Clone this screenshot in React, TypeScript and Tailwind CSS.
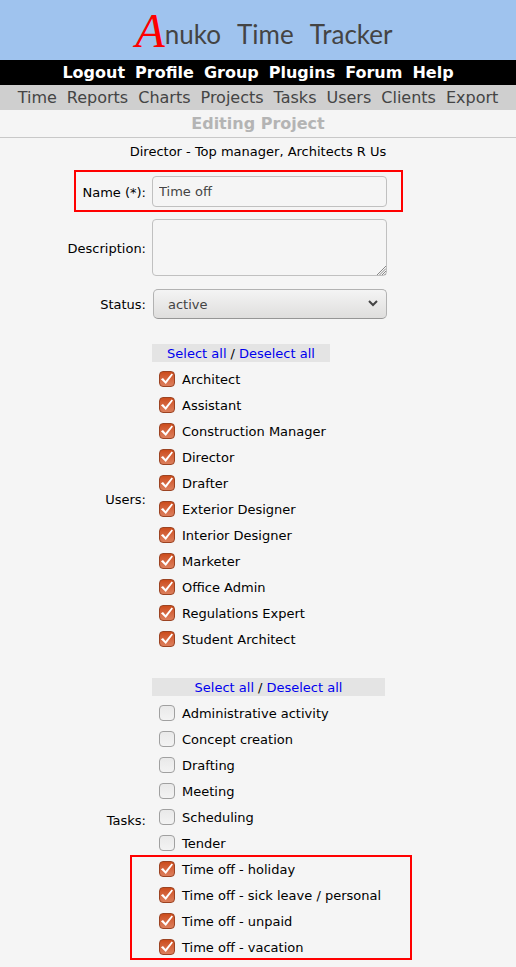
import { useState } from "react";

const mainLinks = ["Logout", "Profile", "Group", "Plugins", "Forum", "Help"];
const sectionLinks = ["Time", "Reports", "Charts", "Projects", "Tasks", "Users", "Clients", "Export"];

const users = [
  "Architect",
  "Assistant",
  "Construction Manager",
  "Director",
  "Drafter",
  "Exterior Designer",
  "Interior Designer",
  "Marketer",
  "Office Admin",
  "Regulations Expert",
  "Student Architect",
];

const workTasks = ["Administrative activity", "Concept creation", "Drafting", "Meeting", "Scheduling", "Tender"];
const timeOffTasks = [
  "Time off - holiday",
  "Time off - sick leave / personal",
  "Time off - unpaid",
  "Time off - vacation",
];

type CheckRowProps = { label: string; checked: boolean; onToggle: () => void };

function CheckRow({ label, checked, onToggle }: CheckRowProps) {
  return (
    <label className="flex h-[26px] items-center gap-[7px] pl-[7px]">
      <span className="relative flex size-4">
        <input
          type="checkbox"
          checked={checked}
          onChange={onToggle}
          className="size-4 appearance-none rounded-[4px] border border-[#a0a0a0] bg-linear-to-b from-[#e9e9e9] to-[#f3f3f3] checked:border-[#9c4322] checked:from-[#cc4c1a] checked:to-[#dc7f5c]"
        />
        {checked && (
          <svg viewBox="0 0 16 16" aria-hidden="true" className="pointer-events-none absolute inset-0 size-4">
            <path d="M1.9 8.2 4 7 6.5 9.9 12.6 2.6 14 3.6 6.8 13Z" fill="#fff" />
          </svg>
        )}
      </span>
      <span className="pt-0.5 whitespace-nowrap">{label}</span>
    </label>
  );
}

function SelectBar({ onSelect }: { onSelect: (value: boolean) => void }) {
  return (
    <div className="mb-1 flex h-[18px] items-end justify-center gap-1 bg-[#e4e4e4]">
      <button type="button" className="text-[#0000ee]" onClick={() => onSelect(true)}>
        Select all
      </button>
      <span>/</span>
      <button type="button" className="text-[#0000ee]" onClick={() => onSelect(false)}>
        Deselect all
      </button>
    </div>
  );
}

export default function App() {
  const [name, setName] = useState("Time off");
  const [selectedUsers, setSelectedUsers] = useState<string[]>(users);
  const [selectedTasks, setSelectedTasks] = useState<string[]>(timeOffTasks);

  const toggle = (list: string[], item: string) =>
    list.includes(item) ? list.filter((entry) => entry !== item) : [...list, item];

  const taskRow = (task: string) => (
    <CheckRow
      key={task}
      label={task}
      checked={selectedTasks.includes(task)}
      onToggle={() => setSelectedTasks(toggle(selectedTasks, task))}
    />
  );

  return (
    <div className="min-h-screen bg-[#f5f5f5] pb-[7px] font-['DejaVu_Sans',sans-serif] text-[13px] leading-4 text-black">
      <header>
        <div className="flex h-[60px] justify-center bg-[#9fc3ee] pt-[19px] pl-3">
          <a href="#home" className="flex items-start font-[Lato,sans-serif] text-[26px] leading-[30px] text-[#444]">
            <span className="font-['Liberation_Serif',serif] text-5xl leading-6 text-[#f00] italic">A</span>
            <span>nuko</span>
            <span className="ml-4">Time</span>
            <span className="ml-4">Tracker</span>
          </a>
        </div>
        <nav aria-label="Main" className="flex h-[25px] items-center justify-center gap-[10px] bg-black text-base font-bold text-white">
          {mainLinks.map((link) => (
            <a key={link} href={`#${link.toLowerCase()}`}>
              {link}
            </a>
          ))}
        </nav>
        <nav aria-label="Sections" className="flex h-[25px] items-center justify-center gap-[10px] bg-[#cfcfcf] text-base text-[#444]">
          {sectionLinks.map((link) => (
            <a key={link} href={`#${link.toLowerCase()}`}>
              {link}
            </a>
          ))}
        </nav>
        <h1 className="flex h-7 items-center justify-center border-b border-[#c8c8c8] text-base font-bold text-[#b4b4b4]">
          Editing Project
        </h1>
      </header>

      <main>
        <p className="pt-[6px] text-center">Director - Top manager, Architects R Us</p>

        <form className="mx-auto mt-4 w-96" onSubmit={(event) => event.preventDefault()}>
          <div className="relative grid grid-cols-[80px_1fr] items-center gap-x-[6px]">
            <label htmlFor="name" className="pt-0.5 text-right whitespace-nowrap">
              Name (*):
            </label>
            <input
              id="name"
              value={name}
              onChange={(event) => setName(event.target.value)}
              className="h-[31px] w-[235px] rounded-[4px] border border-[#c0c0c0] px-[6px] text-[#444]"
            />
            <div className="pointer-events-none absolute -top-[6px] right-[47px] -bottom-[5px] left-2 border-2 border-[#f00]" />
          </div>

          <div className="mt-3 grid grid-cols-[80px_1fr] items-center gap-x-[6px]">
            <label htmlFor="description" className="pt-0.5 text-right whitespace-nowrap">
              Description:
            </label>
            <div className="relative flex h-[57px] w-[235px]">
              <textarea
                id="description"
                className="size-full resize-none rounded-[4px] border border-[#c0c0c0] px-[6px] py-1 text-[#444]"
              />
              <svg
                viewBox="0 0 9 9"
                aria-hidden="true"
                className="pointer-events-none absolute right-px bottom-px size-[9px]"
              >
                <path d="M0 9 9 0M2.5 9 9 2.5M5 9 9 5M7.5 9 9 7.5" stroke="#888" strokeWidth="1" fill="none" />
              </svg>
            </div>
          </div>

          <div className="mt-[13px] grid grid-cols-[80px_1fr] items-center gap-x-[6px]">
            <label htmlFor="status" className="pt-0.5 text-right whitespace-nowrap">
              Status:
            </label>
            <div className="relative w-[235px] pl-px">
              <select
                id="status"
                defaultValue="active"
                className="block h-[30px] w-full appearance-none rounded-[5px] border border-[#b2b2b2] border-b-[#969696] bg-linear-to-b from-[#f4f4f4] to-[#dfdedd] px-[14px] pt-0.5 text-[#444]"
              >
                <option value="active">active</option>
                <option value="inactive">inactive</option>
              </select>
              <svg
                viewBox="0 0 10 7"
                aria-hidden="true"
                className="pointer-events-none absolute top-[11px] right-[9px] h-[7px] w-[10px]"
              >
                <path d="M1 1 5 5 9 1" stroke="#444" strokeWidth="2" fill="none" />
              </svg>
            </div>
          </div>

          <div role="group" aria-labelledby="users-label" className="mt-[25px] grid grid-cols-[80px_1fr] items-center gap-x-[6px]">
            <div id="users-label" className="pt-1 text-right">
              Users:
            </div>
            <div className="w-[178px]">
              <SelectBar onSelect={(value) => setSelectedUsers(value ? users : [])} />
              {users.map((user) => (
                <CheckRow
                  key={user}
                  label={user}
                  checked={selectedUsers.includes(user)}
                  onToggle={() => setSelectedUsers(toggle(selectedUsers, user))}
                />
              ))}
            </div>
          </div>

          <div role="group" aria-labelledby="tasks-label" className="mt-[26px] grid grid-cols-[80px_1fr] items-center gap-x-[6px]">
            <div id="tasks-label" className="pt-1 text-right">
              Tasks:
            </div>
            <div className="w-[233px]">
              <SelectBar onSelect={(value) => setSelectedTasks(value ? [...workTasks, ...timeOffTasks] : [])} />
              {workTasks.map(taskRow)}
              <div className="relative">
                {timeOffTasks.map(taskRow)}
                <div className="pointer-events-none absolute -top-px -right-[27px] bottom-0 -left-[22px] border-2 border-[#f00]" />
              </div>
            </div>
          </div>
        </form>
      </main>
    </div>
  );
}
